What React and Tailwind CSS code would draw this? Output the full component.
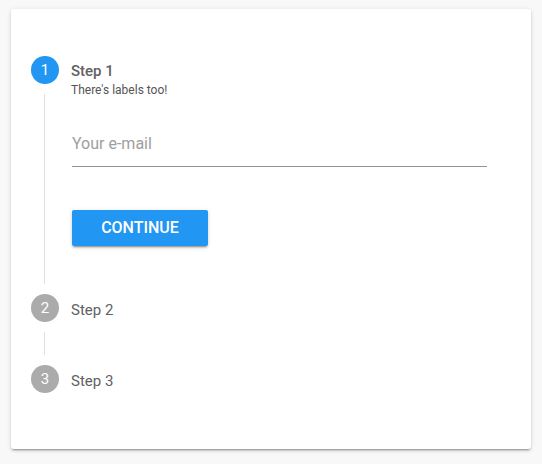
export default function App() {
  const font = { fontFamily: 'Roboto, "Noto Sans", sans-serif' };
  return (
    <div className="w-[542px] h-[464px] bg-[#f8f8f8] pt-[9px] pl-[11px]" style={font}>
      <div className="w-[520px] h-[440px] bg-white rounded-[3px] shadow-[0_3px_1px_-2px_rgba(0,0,0,0.2),0_2px_2px_0_rgba(0,0,0,0.14),0_1px_5px_0_rgba(0,0,0,0.12)] pt-[47px] pl-[20px]">
        {/* Step 1 header */}
        <div className="flex items-start h-7">
          <div className="w-7 h-7 shrink-0 rounded-full bg-[#2196f3] text-white flex items-center justify-center text-[15px] leading-none">1</div>
          <div className="ml-3 pt-[5px]">
            <div className="text-[15px] leading-5 font-medium text-[#616161]">Step 1</div>
            <div className="mt-[2px] text-xs leading-[14px] text-[#555]">There's labels too!</div>
          </div>
        </div>
        {/* Step 1 content */}
        <div className="ml-[13px] mt-[10px] h-[190px] border-l border-[#e0e0e0] pl-[27px] pt-[40px]">
          <input
            placeholder="Your e-mail"
            className="block w-[415px] pb-[12px] leading-5 text-base text-[#333] placeholder:text-[#9e9e9e] border-b border-[#949494] outline-none bg-transparent"
          />
          <button className="mt-[43px] w-[136px] h-9 rounded-[2px] bg-[#2196f3] text-white text-base font-medium shadow-[0_3px_1px_-2px_rgba(0,0,0,0.2),0_2px_2px_0_rgba(0,0,0,0.14),0_1px_5px_0_rgba(0,0,0,0.12)]">
            CONTINUE
          </button>
        </div>
        {/* Step 2 */}
        <div className="mt-[10px] flex items-center">
          <div className="w-7 h-7 rounded-full bg-[#ababab] text-white flex items-center justify-center text-[15px] leading-none">2</div>
          <div className="ml-3 mt-[3px] text-[15px] leading-5 text-[#616161]">Step 2</div>
        </div>
        <div className="ml-[13px] mt-[10px] h-[23px] border-l border-[#e0e0e0]" />
        {/* Step 3 */}
        <div className="mt-[10px] flex items-center">
          <div className="w-7 h-7 rounded-full bg-[#ababab] text-white flex items-center justify-center text-[15px] leading-none">3</div>
          <div className="ml-3 mt-[3px] text-[15px] leading-5 text-[#616161]">Step 3</div>
        </div>
      </div>
    </div>
  );
}
